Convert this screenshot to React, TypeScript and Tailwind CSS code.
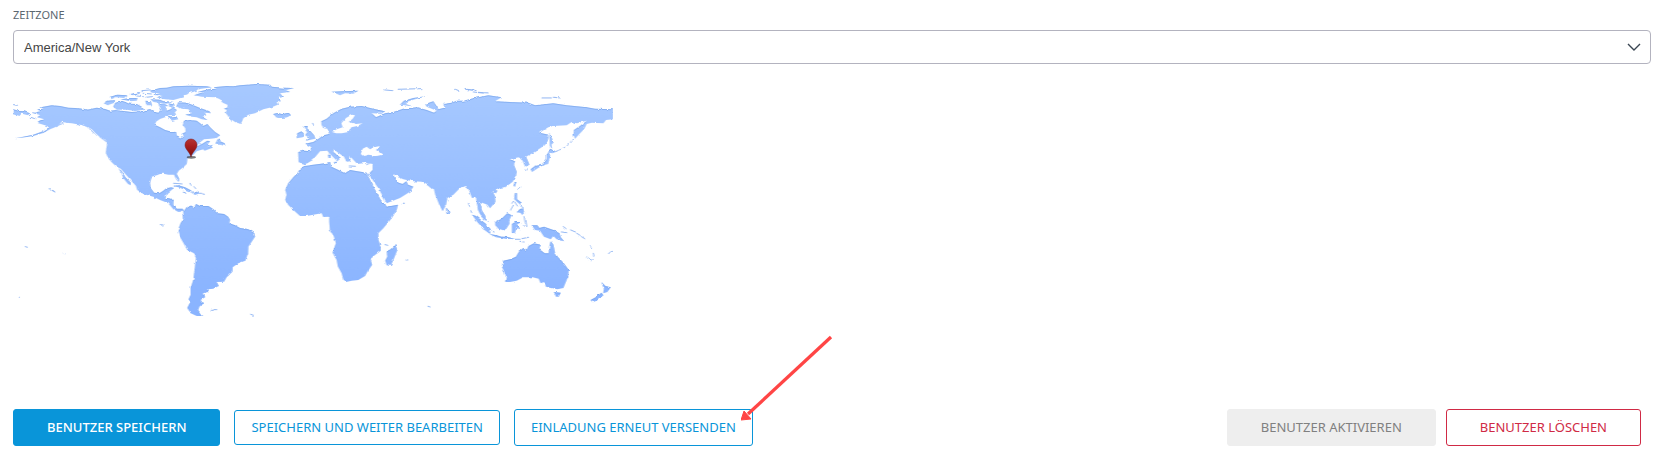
import type { ButtonHTMLAttributes } from "react";

type MapGroup = { name: string; offset: string; fill: string; land: string[]; specks: string[] };

const groups: MapGroup[] = [
  {
    name: "north-america",
    offset: "translate(0 210)",
    fill: "url(#land-north)",
    land: [
      "M103 128L120 124 112 118 130 116 122 112 155 106 180 108 205 113 225 114 250 116 262 119 290 113 315 117 330 122 350 120 370 123 395 126 415 124 430 126 440 120 450 117 462 126 475 128 484 122 480 110 490 105 498 112 500 122 512 118 518 112 530 120 524 128 528 134 510 136 495 142 480 147 468 155 465 165 480 172 495 180 515 185 528 186 530 196 540 206 548 200 545 192 557 186 556 175 548 165 552 152 570 150 590 152 600 160 610 168 622 162 630 172 645 186 660 196 650 204 632 206 612 208 598 218 588 230 606 222 622 212 630 214 622 224 630 226 618 236 602 240 590 244 580 254 570 262 562 266 560 282 550 292 536 302 530 312 538 328 536 336 528 326 522 314 505 314 490 311 480 312 470 316 455 320 450 340 452 355 462 368 478 370 490 362 500 354 512 352 522 354 512 362 500 372 496 383 510 386 521 386 520 405 530 416 548 416 556 432 548 422 535 426 520 418 505 400 480 390 460 380 430 372 412 360 408 348 392 330 374 310 362 296 350 290 338 280 325 265 318 250 320 230 322 218 312 208 298 200 285 188 275 178 262 170 240 164 215 160 195 158 185 155 175 168 165 172 150 178 130 189 100 198 75 202 45 205 70 200 100 194 125 185 148 172 135 166 115 160 118 154 132 148 112 142 120 136Z",
      "M356 296L364 302 376 322 392 338 392 346 384 342 370 325 366 312Z",
      "M39 118L60 123 72 124 90 130 84 136 66 131 56 138 39 133Z",
      "M535 97L560 98 580 106 600 114 628 124 632 130 615 128 618 136 608 141 622 150 605 148 590 142 575 140 556 134 575 130 565 118 545 116 530 108Z",
      "M346 98L370 94 388 101 410 102 425 110 432 119 405 123 380 119 350 119 340 110Z",
      "M312 100L324 92 345 90 340 100 322 106Z",
      "M450 62L480 54 500 53 520 49 570 47 620 49 635 52 600 57 580 66 568 68 560 74 548 76 550 82 520 90 495 88 470 82 488 78 460 74 480 70 455 68Z",
      "M452 88L480 89 490 94 520 95 500 101 480 99 460 96Z",
      "M475 103L492 100 504 108 490 114 480 112Z",
      "M436 92L452 94 456 106 440 106Z",
      "M506 100L524 104 518 114 508 110Z",
      "M503 140L528 138 534 148 516 152Z",
      "M330 80L352 74 382 76 372 84 348 82 334 88Z",
      "M362 88L392 84 412 84 410 92 388 94Z",
      "M388 72L420 66 418 72 398 76Z",
      "M582 76L610 66 590 67 625 58 650 56 640 52 680 48 700 49 720 46 770 42 810 44 815 50 850 53 882 54 858 61 870 66 840 70 848 80 835 84 842 94 830 97 833 104 815 112 790 118 765 130 745 134 730 145 722 162 705 156 690 146 678 130 680 120 672 116 684 112 682 104 668 98 660 88 645 82 605 80Z",
      "M820 132L832 130 845 133 865 129 872 136 860 142 840 144 828 140Z",
      "M646 224L656 206 662 207 660 214 674 220 675 228 660 224Z",
      "M606 234L622 232 640 224 636 234 614 242Z",
      "M518 348L535 346 555 352 575 362 568 364 550 358 535 352Z",
      "M575 368L590 366 600 370 585 375Z",
    ],
    specks: [
      "M98 128l12 4M40 104l12 2M92 142l12 4M147 356l3 2M156 361l6 4M160 362l3 4M608 372l5 1M550 367l8 1M410 78l20 2M430 70l24 2M438 82l20-2M426 62l24-2M520 76l12 3M500 64l30-4M590 220l12 2M175 166l14-6M268 176l14 14M300 202l20 14M570 340l3 6M524 340l22 2M582 350l5 6",
    ],
  },
  {
    name: "south-america",
    offset: "translate(0 570)",
    fill: "url(#land-south)",
    land: [
      "M550 66L560 52 578 45 582 54 588 42 600 48 625 48 640 58 652 70 672 72 684 80 690 90 688 100 705 106 720 114 745 118 762 128 765 140 755 155 745 170 744 190 736 212 715 220 698 232 697 245 680 262 672 275 650 276 656 288 640 296 625 298 627 306 612 310 615 322 602 330 609 342 598 350 594 362 602 374 610 378 590 378 572 370 562 354 570 338 566 328 572 315 572 295 580 270 584 240 588 205 582 190 562 180 550 158 538 138 533 124 542 100 552 85Z",
    ],
    specks: [
      "M634 361l6 0M642 359l8 0M481 104l8 1M554 8l6 2M572 6l20 1M600 10l5 0M160 3l4 2M76 170l6 2M190 190l4 1M55 322l3 0M752 373l8 3",
    ],
  },
  {
    name: "old-world",
    offset: "translate(810 210)",
    fill: "url(#land-north)",
    land: [
      "M85 246L102 242 122 244 124 232 106 221 130 216 148 205 160 196 178 192 172 176 160 174 155 165 154 154 170 146 190 130 215 116 240 110 275 108 310 116 345 124 335 131 305 130 318 142 345 130 370 126 400 116 440 112 470 120 492 128 500 122 470 110 466 102 490 94 505 118 530 112 520 102 545 98 560 92 580 92 610 85 655 76 695 82 675 94 720 96 775 98 795 106 850 100 890 106 950 112 975 116 1029 118 1029 148 1008 150 1000 160 965 158 950 162 942 178 928 192 915 206 911 196 912 180 930 168 950 152 920 160 905 156 890 166 850 168 835 172 808 188 836 194 834 212 815 232 790 248 768 260 778 284 766 291 758 272 746 262 720 268 735 274 732 286 740 306 738 318 728 335 708 350 685 356 668 364 675 380 676 396 660 415 652 404 640 400 630 396 636 422 646 438 648 454 634 440 624 420 618 382 606 384 598 362 588 348 570 354 550 374 532 384 528 404 518 424 508 404 496 374 492 358 482 354 475 348 455 335 430 334 410 330 400 328 385 322 375 312 371 318 385 338 398 342 409 334 414 344 430 350 420 365 390 384 350 400 342 385 325 355 300 318 294 314 308 300 308 282 290 278 262 282 245 264 238 260 242 274 230 275 222 260 200 245 192 236 190 246 212 264 202 274 186 258 172 242 150 244 138 258 128 270 112 280 100 284 86 276Z",
      "M102 288L130 284 165 280 180 276 184 290 205 300 225 310 240 300 262 304 290 308 294 318 305 340 318 365 332 390 345 402 350 410 384 404 380 420 365 445 340 475 325 490 325 510 332 530 332 542 308 560 302 570 306 585 292 605 285 618 265 630 245 632 228 636 220 628 215 610 204 590 200 570 188 548 198 520 192 500 180 480 178 455 178 440 160 441 155 430 130 434 110 438 90 438 70 420 55 405 46 390 50 375 46 360 55 340 70 322 82 310 90 298Z",
      "M376 526L382 540 372 565 362 588 350 586 346 572 352 560 350 545 365 538Z",
      "M102 168L113 168 112 176 120 182 132 196 136 206 108 212 118 204 106 196 112 186Z",
      "M82 190L95 184 102 192 98 202 80 205Z",
      "M185 65L215 64 265 62 250 71 225 70 210 76Z",
      "M390 104L402 92 430 84 472 78 440 86 412 95 408 103 426 108Z",
      "M11 132L25 130 38 133 56 129 62 136 50 142 30 144 18 140Z",
      "M174 254l8 0 0 12-6 0Z",
      "M190 276l12-1-2 6Z",
      "M528 412l8 10 2 10-8 0Z",
    ],
    specks: [
      "M176 244l2 6M238 288l18 1M290 284l10-4M344 60l24 2M385 58l70-2M556 58l10 4M592 58l26 4M624 67l30 2M408 570l2 0M398 400l5 0M345 524l8 2M128 160l2 4M175 178l10 4",
    ],
  },
  {
    name: "pacific",
    offset: "translate(1260 210)",
    fill: "url(#land-north)",
    land: [
      "M332 298L345 288 365 284 380 268 380 255 386 246 390 256 388 268 384 282 370 286 358 292 336 306Z",
      "M386 236L404 242 398 250 386 248Z",
      "M388 188L394 200 400 218 394 224 396 236 390 232Z",
      "M280 348l4-12 5 0-4 14Z",
      "M220 358l12 4-4 8-8-2Z",
      "M284 370l7 0 0 18 14 10-2 8-12-10-8-8Z",
      "M290 427l10-10 10-2 2 14-6 6-4-6Z",
      "M226 456L245 446 262 430 275 436 268 450 268 462 255 482 235 476 226 466Z",
      "M156 434L168 438 195 460 212 478 210 492 190 478 170 454Z",
      "M208 492L230 496 244 500 260 500 284 506 260 507 228 502Z",
      "M276 462L286 456 304 456 290 464 302 478 290 474 284 490 276 488Z",
      "M335 466L352 466 358 474 372 470 400 480 418 490 422 502 432 514 410 508 400 498 392 508 372 500 360 482 345 480Z",
      "M256 636L258 618 246 590 250 572 270 568 288 560 298 544 310 534 320 540 326 528 342 520 362 524 358 538 374 550 386 550 388 530 392 514 400 524 405 548 414 562 430 578 446 600 444 620 430 654 412 658 395 654 378 650 372 636 362 640 356 626 338 622 310 622 290 632 270 636Z",
      "M402 666L422 668 416 680 408 680Z",
      "M544 636L556 648 572 652 562 666 550 670 552 656Z",
      "M512 690L530 680 544 668 550 676 530 692 518 697Z",
    ],
    specks: [
      "M404 246l10-4M418 240l4-2M430 234l4-2M442 226l3-2M452 218l3-3M458 210l2-2M146 400l2 10M152 422l3 6M284 508l16 0M306 506l20-4M300 514l12 2M312 440l4 20M318 452l2 16M302 408l8 6M272 420l8-14M276 400l4-6M284 396l8 12M424 486l16 2M430 470l8 6M452 480l14 6M470 490l10 6M484 500l10 6M500 564l12 8M512 572l4-4M520 550l2 8M512 530l4 6M566 550l6-2M572 546l6-2M24 709l6 2M135 58l30 4M160 66l30 4M366 84l28 0M400 82l20 2M322 296l-6 6M302 352l-6 4M198 448l6 6M216 484l6 2M310 468l10 1",
    ],
  },
];

function WorldMap() {
  return (
    <svg viewBox="39 216 1800 750" className="block w-[600px] max-w-full" role="img" aria-label="America/New York">
      <defs>
        <linearGradient id="land-north" gradientUnits="userSpaceOnUse" x1="0" y1="40" x2="0" y2="680">
          <stop offset="0" stopColor="#a7c9ff" />
          <stop offset="1" stopColor="#8ab4ff" />
        </linearGradient>
        <linearGradient id="land-south" gradientUnits="userSpaceOnUse" x1="0" y1="-320" x2="0" y2="320">
          <stop offset="0" stopColor="#a7c9ff" />
          <stop offset="1" stopColor="#8ab4ff" />
        </linearGradient>
        <filter id="coast" x="-2%" y="-2%" width="104%" height="104%">
          <feTurbulence type="fractalNoise" baseFrequency="0.07" numOctaves="2" seed="4" result="noise" />
          <feDisplacementMap in="SourceGraphic" in2="noise" scale="8" xChannelSelector="R" yChannelSelector="G" result="land" />
          <feOffset in="land" dy="2" result="lower" />
          <feFlood floodColor="#6f9fe8" floodOpacity="0.6" />
          <feComposite in2="land" operator="in" result="edge" />
          <feComposite in="edge" in2="lower" operator="out" result="rim" />
          <feMerge>
            <feMergeNode in="land" />
            <feMergeNode in="rim" />
          </feMerge>
        </filter>
        <linearGradient id="pin" x1="0" y1="0" x2="0" y2="1">
          <stop offset="0" stopColor="#b53333" />
          <stop offset="0.4" stopColor="#a81d1d" />
          <stop offset="1" stopColor="#7a1010" />
        </linearGradient>
      </defs>
      <g filter="url(#coast)">
        {groups.map((group) => (
          <g key={group.name} transform={group.offset}>
            {group.land.map((d) => (
              <path key={d} d={d} fill={group.fill} />
            ))}
            {group.specks.map((d) => (
              <path key={d} d={d} fill="none" stroke="#a9c8fb" strokeWidth="2.5" strokeLinecap="round" />
            ))}
          </g>
        ))}
        <path
          transform="translate(810 210)"
          fill="#fff"
          d="M272 252L278 236 290 230 300 238 312 232 330 228 318 240 338 254 320 258 295 254 280 258ZM186 186L200 178 218 172 214 160 228 144 245 134 255 136 248 146 236 156 258 162 278 160 262 168 244 172 236 186 215 190 198 190Z"
        />
      </g>
      <ellipse cx="574" cy="472" rx="14" ry="4" fill="#333" opacity="0.65" />
      <path
        d="M573 471C570 457 555 448 555 435A18 18 0 0 1 591 435C591 448 576 457 573 471Z"
        fill="url(#pin)"
        stroke="#7d1717"
        strokeWidth="1.5"
      />
    </svg>
  );
}

function Action({ className = "", ...props }: ButtonHTMLAttributes<HTMLButtonElement>) {
  return (
    <button
      type="button"
      className={`rounded-[3px] border text-[13px] leading-[19px] whitespace-nowrap uppercase ${className}`}
      {...props}
    />
  );
}

export default function App() {
  return (
    <form className="bg-white pt-2 pr-2 pb-4 pl-[13px] font-['Noto_Sans',sans-serif]" onSubmit={(e) => e.preventDefault()}>
      <label htmlFor="timezone" className="block text-[11px] leading-[14px] text-[#5b6770] uppercase">
        Zeitzone
      </label>
      <div className="mt-2 grid items-center">
        <select
          id="timezone"
          className="col-start-1 row-start-1 h-[34px] w-full appearance-none rounded border border-[#b3b3bf] bg-white pt-[2px] pr-9 pl-[10px] font-['Liberation_Sans',Arial,sans-serif] text-[13px] text-[#444]"
        >
          <option>America/New York</option>
        </select>
        <svg
          viewBox="0 0 14 8"
          className="pointer-events-none col-start-1 row-start-1 mr-[10px] h-2 w-[14px] justify-self-end"
          fill="none"
          stroke="#3a4652"
          strokeWidth="1.4"
          aria-hidden="true"
        >
          <path d="M1 1l6 6 6-6" />
        </svg>
      </div>

      <div className="mt-2">
        <WorldMap />
      </div>

      <div className="mt-[87px] flex items-center justify-between pr-[10px]">
        <div className="flex items-center gap-[14px]">
          <Action className="border-[#0995d9] bg-[#0995d9] px-[33px] py-2 font-medium text-white">Benutzer speichern</Action>
          <Action className="border-[#0995d9] px-4 py-[7px] text-[#0995d9]">Speichern und weiter bearbeiten</Action>
          <div className="relative">
            <Action className="border-[#0995d9] px-4 py-2 text-[#0995d9]">Einladung erneut versenden</Action>
            <svg
              viewBox="0 0 92 86"
              className="pointer-events-none absolute -right-20 bottom-[25px] h-[86px] w-[92px]"
              aria-hidden="true"
            >
              <path d="M90 2L7 79" stroke="#ff4545" strokeWidth="3.3" />
              <path d="M0 85L3 76 10 84Z" fill="#ff4545" stroke="#ff4545" />
            </svg>
          </div>
        </div>
        <div className="flex items-center gap-[10px]">
          <Action disabled className="border-[#eee] bg-[#eee] px-[33px] py-2 text-[#808080]">
            Benutzer aktivieren
          </Action>
          <Action className="border-[#d02a45] px-[33px] py-2 text-[#d02a45]">Benutzer löschen</Action>
        </div>
      </div>
    </form>
  );
}
